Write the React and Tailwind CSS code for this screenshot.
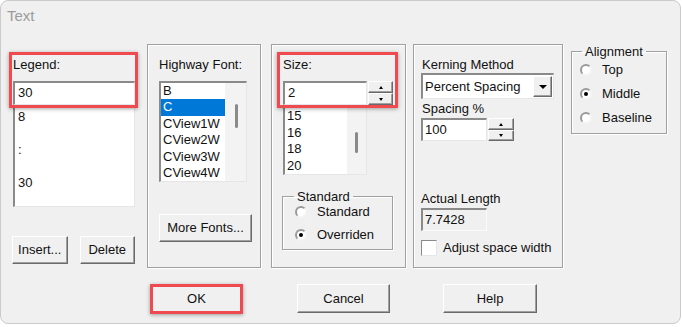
import React from "react";

const sunken =
  "bg-white border-t-2 border-l-2 border-r border-b border-t-[#8a8a8a] border-l-[#8a8a8a] border-r-[#e6e6e6] border-b-[#e6e6e6]";
const raised =
  "bg-[#f0f0f0] border border-t-white border-l-white border-r-[#6a6a6a] border-b-[#6a6a6a] shadow-[inset_-1px_-1px_0_#a0a0a0]";
const group =
  "border border-[#a0a0a0] shadow-[inset_1px_1px_0_#ffffff,1px_1px_0_#ffffff]";

const Btn = ({ children, className }) => (
  <div className={`flex items-center justify-center ${raised} ${className}`}>
    {children}
  </div>
);

const Radio = ({ checked, label, className }) => (
  <div className={`flex items-center ${className}`}>
    <span className="w-[12px] h-[12px] rounded-full bg-white border-2 border-t-[#9a9a9a] border-l-[#9a9a9a] border-r-[#f4f4f4] border-b-[#f4f4f4] flex items-center justify-center">
      {checked && <span className="w-[4px] h-[4px] rounded-full bg-black" />}
    </span>
    <span className="ml-[10px]">{label}</span>
  </div>
);

const Spin = ({ up, down }) => (
  <div className="flex flex-col ml-px">
    <div className={`flex items-center justify-center ${raised} ${up}`}>
      <span className="w-0 h-0 border-x-[2px] border-x-transparent border-b-[3px] border-b-black" />
    </div>
    <div className={`flex items-center justify-center ${raised} ${down}`}>
      <span className="w-0 h-0 border-x-[2px] border-x-transparent border-t-[3px] border-t-black" />
    </div>
  </div>
);

const Thumb = ({ className }) => (
  <div className={`w-[3px] rounded-full bg-[#8a8a8a] ${className}`} />
);

export default function App() {
  const fonts = ["B", "C", "CView1W", "CView2W", "CView3W", "CView4W"];
  const sizes = ["15", "16", "18", "20"];
  const legend = ["8", "", ":", "", "30"];

  return (
    <div className="w-[682px] h-[327px] bg-white font-['Liberation_Sans',Arial,sans-serif] text-[13px] text-[#111]">
      <div className="relative w-[681px] h-[324px] rounded-[8px] border border-[#cacaca] bg-[#f0f0f0] overflow-hidden">
        {/* title */}
        <div className="h-[43px] pl-[6px] pt-[4px] text-[15px] text-[#9b9b9b]">Text</div>

        {/* groups row */}
        <div className="flex items-start pl-[12px]">
          {/* legend column */}
          <div className="w-[122px] flex flex-col">
            <div className="mt-[13px] h-[16px] leading-[16px]">Legend:</div>
            <div className={`mt-[8px] h-[24px] pl-[3px] leading-[20px] ${sunken}`}>30</div>
            <div className="h-[102px] bg-white border-l-2 border-[#8a8a8a] border-r border-r-[#e6e6e6] border-b border-b-[#e6e6e6] pl-[3px] pt-[4px]">
              {legend.map((t, i) => (
                <div key={i} className="h-[16.5px] leading-[16.5px]">{t}</div>
              ))}
            </div>
            <div className="flex gap-[12px] mt-[29px] -ml-px">
              <Btn className="w-[56px] h-[28px]">Insert...</Btn>
              <Btn className="w-[56px] h-[28px]">Delete</Btn>
            </div>
          </div>

          {/* highway font */}
          <div className={`ml-[12px] w-[114px] h-[224px] pl-[11px] ${group}`}>
            <div className="mt-[12px] h-[16px] leading-[16px]">Highway Font:</div>
            <div className={`mt-[8px] w-[88px] h-[101px] flex ${sunken}`}>
              <div className="w-[64px] overflow-hidden">
                {fonts.map((f) => (
                  <div
                    key={f}
                    className={`h-[16.4px] leading-[16.4px] pl-[2px] whitespace-nowrap ${
                      f === "C" ? "bg-[#0078d7] text-white" : ""
                    }`}
                  >
                    {f}
                  </div>
                ))}
              </div>
              <div className="flex-1 bg-[#f3f3f3] flex justify-center pl-[1px]">
                <Thumb className="h-[24px] mt-[21px]" />
              </div>
            </div>
            <Btn className="mt-[32px] w-[93px] h-[28px]">More Fonts...</Btn>
          </div>

          {/* size */}
          <div className={`ml-[10px] w-[135px] h-[224px] pl-[11px] ${group}`}>
            <div className="mt-[12px] h-[16px] leading-[16px]">Size:</div>
            <div className="mt-[8px] flex">
              <div className={`w-[84px] h-[24px] pl-[3px] leading-[20px] ${sunken}`}>2</div>
              <Spin up="w-[25px] h-[12px]" down="w-[25px] h-[12px]" />
            </div>
            <div className="w-[84px] h-[70px] flex bg-white border-l-2 border-[#8a8a8a] border-r border-r-[#e6e6e6] border-b border-b-[#e6e6e6]">
              <div className="w-[62px] pl-[2px] pt-[3px] overflow-hidden">
                {sizes.map((s) => (
                  <div key={s} className="h-[16.5px] leading-[16.5px]">{s}</div>
                ))}
              </div>
              <div className="flex-1 bg-[#f3f3f3] flex justify-center">
                <Thumb className="h-[21px] mt-[27px]" />
              </div>
            </div>
            <fieldset className={`mt-[14px] -ml-px w-[111px] ${group}`}>
              <legend className="ml-[11px] px-[3px] leading-[15px]">Standard</legend>
              <Radio label="Standard" className="h-[16px] ml-[12px]" />
              <Radio checked label="Overriden" className="h-[16px] mt-[7px] mb-[6px] ml-[12px]" />
            </fieldset>
          </div>

          {/* kerning */}
          <div className={`ml-[7px] w-[150px] h-[224px] pl-[7px] ${group}`}>
            <div className="mt-[12px] h-[16px] leading-[16px] pl-px">Kerning Method</div>
            <div className={`w-[133px] h-[26px] flex items-center justify-between pl-[2px] pr-px ${sunken}`}>
              <span className="leading-[20px]">Percent Spacing</span>
              <div className={`w-[19px] h-[21px] flex items-center justify-center ${raised}`}>
                <span className="w-0 h-0 border-x-[4px] border-x-transparent border-t-[4px] border-t-black" />
              </div>
            </div>
            <div className="mt-[1px] h-[18px] leading-[18px] pl-px">Spacing %</div>
            <div className="flex">
              <div className={`w-[66px] h-[23px] pl-[2px] leading-[19px] ${sunken}`}>100</div>
              <Spin up="w-[26px] h-[12px]" down="w-[26px] h-[11px]" />
            </div>
            <div className="mt-[49px] h-[18px] leading-[18px]">Actual Length</div>
            <div className="w-[66px] h-[23px] pl-[2px] leading-[19px] bg-[#f0f0f0] border-t-2 border-l-2 border-r border-b border-t-[#8a8a8a] border-l-[#8a8a8a] border-r-[#fafafa] border-b-[#fafafa]">
              7.7428
            </div>
            <div className="mt-[9px] flex items-center h-[16px]">
              <span className="w-[16px] h-[16px] bg-white border border-t-[#8a8a8a] border-l-[#8a8a8a] border-r-[#e6e6e6] border-b-[#e6e6e6]" />
              <span className="ml-[6px] whitespace-nowrap">Adjust space width</span>
            </div>
          </div>

          {/* alignment */}
          <fieldset className={`ml-[8px] w-[96px] ${group}`}>
            <legend className="ml-[10px] px-[3px] leading-[15px]">Alignment</legend>
            <div className="flex flex-col -mt-[1px] pb-[3px]">
              <Radio label="Top" className="h-[24px] ml-[8px]" />
              <Radio checked label="Middle" className="h-[24px] ml-[8px]" />
              <Radio label="Baseline" className="h-[24px] ml-[8px]" />
            </div>
          </fieldset>
        </div>

        {/* bottom buttons */}
        <div className="flex mt-[16px] pl-[149px] gap-[54px]">
          <Btn className="w-[93px] h-[29px]">OK</Btn>
          <Btn className="w-[93px] h-[29px]">Cancel</Btn>
          <Btn className="w-[94px] h-[29px] -ml-px">Help</Btn>
        </div>

        {/* annotation highlights */}
        <div className="absolute left-[8px] top-[51px] w-[129px] h-[56px] border-[3px] border-[#ef4a4f] shadow-[0_1px_4px_rgba(0,0,0,0.35)]" />
        <div className="absolute left-[276px] top-[51px] w-[121px] h-[56px] border-[3px] border-[#ef4a4f] shadow-[0_1px_4px_rgba(0,0,0,0.35)]" />
        <div className="absolute left-[149px] top-[283px] w-[93px] h-[30px] border-[3px] border-[#ef4a4f] shadow-[0_1px_4px_rgba(0,0,0,0.35)]" />
      </div>
    </div>
  );
}
